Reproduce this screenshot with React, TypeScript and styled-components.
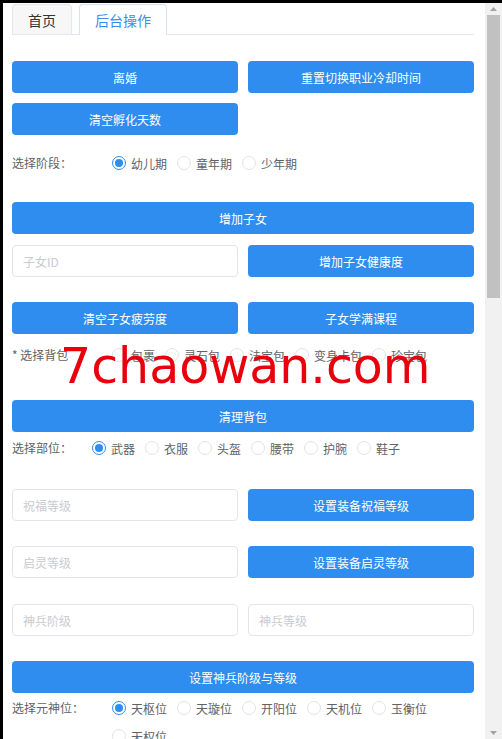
import React from 'react';
import styled, { createGlobalStyle } from 'styled-components';

const GlobalStyle = createGlobalStyle`
    html, body {
        margin: 0;
        padding: 0;
        background: #000;
    }
    body {
        font-family: "Noto Sans CJK SC", "Noto Sans", sans-serif;
        color: #606266;
    }
`;

const BLUE = '#2f8df0';

const Frame = styled.div`
    display: flex;
    height: 736px;
    width: 499px;
    margin: 3px 0 0 3px;
    background: #fff;
    overflow: hidden;
`;

const Page = styled.div`
    position: relative;
    flex: 1;
    padding: 0 11px 0 9px;
    overflow: hidden;
`;

const TabBar = styled.div`
    display: flex;
    gap: 7px;
    height: 31px;
    border-bottom: 1px solid #e4e7ed;
`;

const Tab = styled.div<{ $active?: boolean }>`
    display: flex;
    align-items: center;
    justify-content: center;
    margin-top: 1px;
    padding: 0 15px;
    font-size: 14px;
    border: 1px solid ${(p) => (p.$active ? '#d4e4f2' : '#e4e7ed')};
    border-bottom: none;
    border-radius: 4px 4px 0 0;
    background: ${(p) => (p.$active ? '#fff' : '#f7f7f7')};
    color: ${(p) => (p.$active ? '#3a8ee6' : '#333')};
    margin-bottom: ${(p) => (p.$active ? '-1px' : '0')};
`;

const Block = styled.div<{ $mt: number }>`
    margin-top: ${(p) => p.$mt}px;
`;

const Grid = styled(Block)`
    display: grid;
    grid-template-columns: 1fr 1fr;
    gap: 10px;
`;

const Button = styled.button`
    height: 32px;
    width: 100%;
    border: none;
    border-radius: 4px;
    background: ${BLUE};
    color: #fff;
    font-family: inherit;
    font-size: 12px;
    cursor: pointer;
`;

const Input = styled.input`
    box-sizing: border-box;
    height: 32px;
    width: 100%;
    padding: 0 10px;
    border: 1px solid #e3e5ea;
    border-radius: 4px;
    font-family: inherit;
    font-size: 12px;
    color: #606266;
    outline: none;
    &::placeholder {
        color: #c8cbd1;
    }
`;

const Field = styled(Block)`
    display: flex;
    align-items: flex-start;
`;

const FieldLabel = styled.div<{ $width: number }>`
    flex: none;
    width: ${(p) => p.$width}px;
    line-height: 28px;
    font-size: 12px;
    color: #606266;
`;

const RadioGroup = styled.div`
    display: flex;
    flex-wrap: wrap;
    flex: 1;
`;

const RadioItem = styled.label`
    display: flex;
    align-items: center;
    gap: 5px;
    height: 28px;
    margin-right: 10px;
    font-size: 12px;
    color: #606266;
    white-space: nowrap;
`;

const RadioDot = styled.span<{ $checked?: boolean }>`
    box-sizing: border-box;
    position: relative;
    width: 14px;
    height: 14px;
    border-radius: 50%;
    border: 1px solid ${(p) => (p.$checked ? BLUE : '#e1e3e8')};
    background: #fff;
    &::after {
        content: '';
        display: ${(p) => (p.$checked ? 'block' : 'none')};
        position: absolute;
        left: 2px;
        top: 2px;
        width: 8px;
        height: 8px;
        border-radius: 50%;
        background: ${BLUE};
    }
`;

const Watermark = styled.div`
    position: absolute;
    left: 57px;
    top: 339px;
    font-family: "DejaVu Sans", sans-serif;
    font-size: 49px;
    line-height: 49px;
    color: #e8000c;
    pointer-events: none;
    white-space: nowrap;
`;

const Scrollbar = styled.div`
    display: flex;
    flex-direction: column;
    width: 17px;
    flex: none;
    background: #f1f1f1;
`;

const ScrollArrow = styled.div`
    display: flex;
    align-items: center;
    justify-content: center;
    height: 12px;
    flex: none;
`;

const ScrollThumb = styled.div`
    height: 283px;
    margin: 0 2px;
    background: #c1c1c1;
`;

const ScrollSpace = styled.div`
    flex: 1;
`;

type Option = { label: string; checked?: boolean };

const Radios: React.FC<{ options: Option[] }> = ({ options }) => (
    <RadioGroup>
        {options.map((o) => (
            <RadioItem key={o.label}>
                <RadioDot $checked={o.checked} />
                {o.label}
            </RadioItem>
        ))}
    </RadioGroup>
);

const Arrow: React.FC<{ down?: boolean }> = ({ down }) => (
    <svg width="7" height="4" viewBox="0 0 7 4">
        <polygon points={down ? '0,0 7,0 3.5,4' : '0,4 7,4 3.5,0'} fill="#a3a3a3" />
    </svg>
);

const App: React.FC = () => {
    return (
        <>
            <GlobalStyle />
            <Frame>
                <Page>
                    <TabBar>
                        <Tab>首页</Tab>
                        <Tab $active>后台操作</Tab>
                    </TabBar>

                    <Grid $mt={26}>
                        <Button>离婚</Button>
                        <Button>重置切换职业冷却时间</Button>
                        <Button>清空孵化天数</Button>
                    </Grid>

                    <Field $mt={14}>
                        <FieldLabel $width={100}>选择阶段：</FieldLabel>
                        <Radios
                            options={[
                                { label: '幼儿期', checked: true },
                                { label: '童年期' },
                                { label: '少年期' },
                            ]}
                        />
                    </Field>

                    <Block $mt={25}>
                        <Button>增加子女</Button>
                    </Block>

                    <Grid $mt={11}>
                        <Input placeholder="子女ID" />
                        <Button>增加子女健康度</Button>
                    </Grid>

                    <Grid $mt={25}>
                        <Button>清空子女疲劳度</Button>
                        <Button>子女学满课程</Button>
                    </Grid>

                    <Field $mt={7}>
                        <FieldLabel $width={100}>* 选择背包</FieldLabel>
                        <Radios
                            options={[
                                { label: '包裹' },
                                { label: '灵石包' },
                                { label: '法宝包' },
                                { label: '变身卡包' },
                                { label: '珍宝包' },
                            ]}
                        />
                    </Field>

                    <Block $mt={31}>
                        <Button>清理背包</Button>
                    </Block>

                    <Field $mt={2}>
                        <FieldLabel $width={80}>选择部位：</FieldLabel>
                        <Radios
                            options={[
                                { label: '武器', checked: true },
                                { label: '衣服' },
                                { label: '头盔' },
                                { label: '腰带' },
                                { label: '护腕' },
                                { label: '鞋子' },
                            ]}
                        />
                    </Field>

                    <Grid $mt={27}>
                        <Input placeholder="祝福等级" />
                        <Button>设置装备祝福等级</Button>
                    </Grid>

                    <Grid $mt={25}>
                        <Input placeholder="启灵等级" />
                        <Button>设置装备启灵等级</Button>
                    </Grid>

                    <Grid $mt={26}>
                        <Input placeholder="神兵阶级" />
                        <Input placeholder="神兵等级" />
                    </Grid>

                    <Block $mt={25}>
                        <Button>设置神兵阶级与等级</Button>
                    </Block>

                    <Field $mt={1}>
                        <FieldLabel $width={100}>选择元神位：</FieldLabel>
                        <Radios
                            options={[
                                { label: '天枢位', checked: true },
                                { label: '天璇位' },
                                { label: '开阳位' },
                                { label: '天机位' },
                                { label: '玉衡位' },
                                { label: '天权位' },
                            ]}
                        />
                    </Field>

                    <Watermark>7chaowan.com</Watermark>
                </Page>

                <Scrollbar>
                    <ScrollArrow>
                        <Arrow />
                    </ScrollArrow>
                    <ScrollThumb />
                    <ScrollSpace />
                    <ScrollArrow>
                        <Arrow down />
                    </ScrollArrow>
                </Scrollbar>
            </Frame>
        </>
    );
};

export default App;
